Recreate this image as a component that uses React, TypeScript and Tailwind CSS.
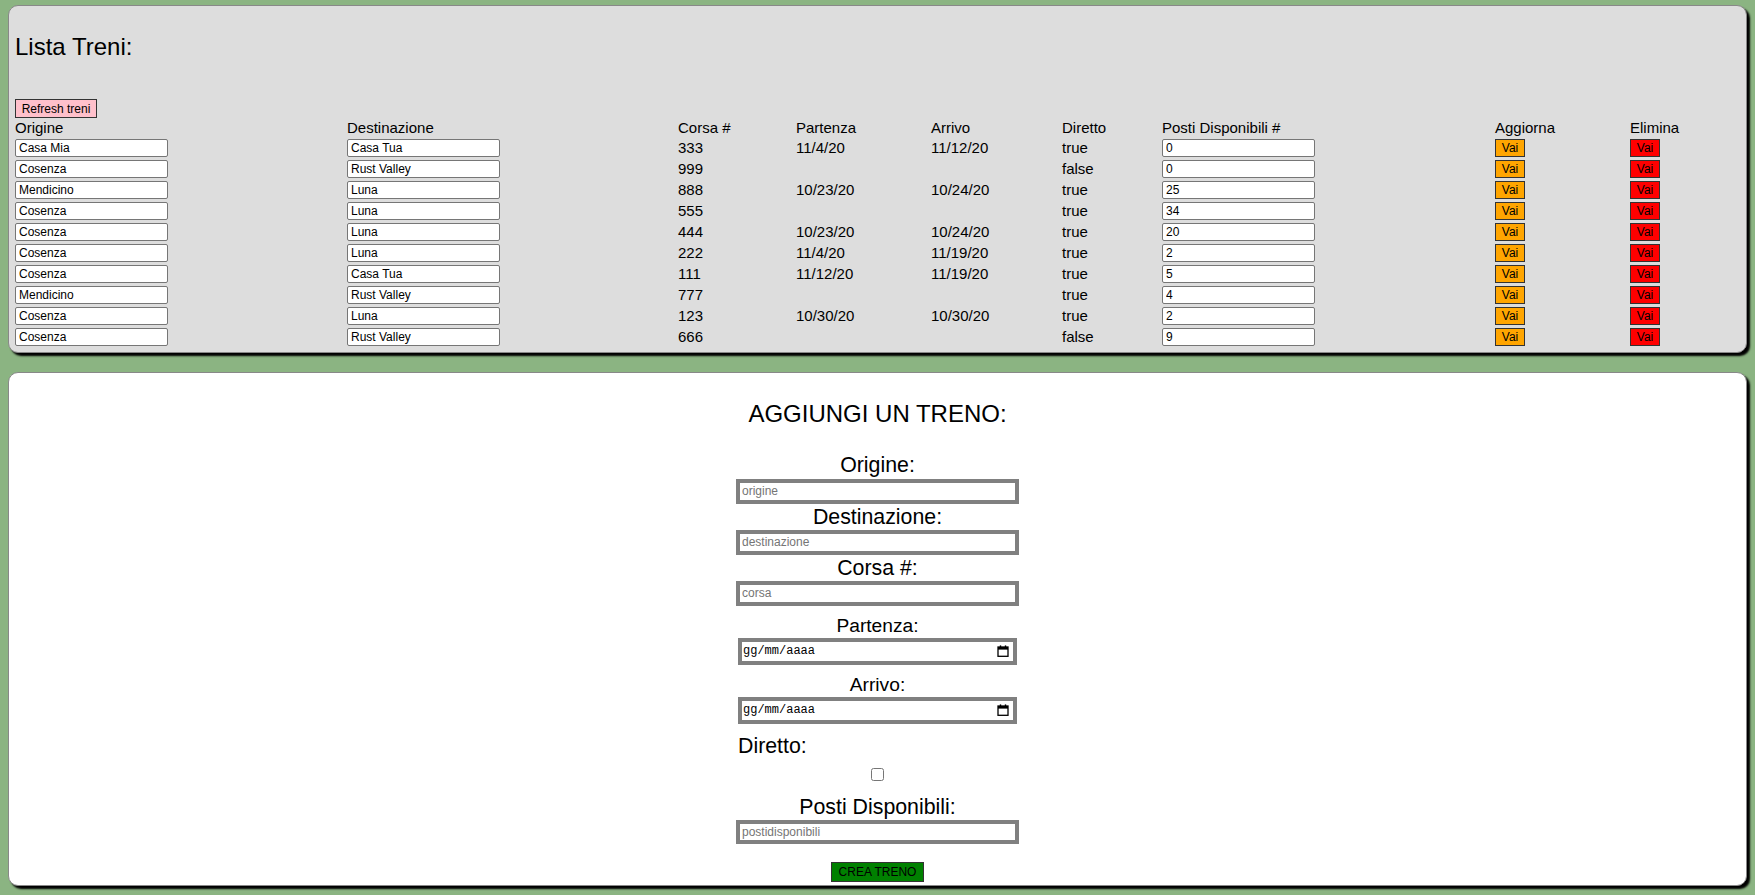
import React from "react";

type Treno = {
  origine: string;
  destinazione: string;
  corsa: string;
  partenza: string;
  arrivo: string;
  diretto: string;
  posti: string;
};

const treni: Treno[] = [
  { origine: "Casa Mia", destinazione: "Casa Tua", corsa: "333", partenza: "11/4/20", arrivo: "11/12/20", diretto: "true", posti: "0" },
  { origine: "Cosenza", destinazione: "Rust Valley", corsa: "999", partenza: "", arrivo: "", diretto: "false", posti: "0" },
  { origine: "Mendicino", destinazione: "Luna", corsa: "888", partenza: "10/23/20", arrivo: "10/24/20", diretto: "true", posti: "25" },
  { origine: "Cosenza", destinazione: "Luna", corsa: "555", partenza: "", arrivo: "", diretto: "true", posti: "34" },
  { origine: "Cosenza", destinazione: "Luna", corsa: "444", partenza: "10/23/20", arrivo: "10/24/20", diretto: "true", posti: "20" },
  { origine: "Cosenza", destinazione: "Luna", corsa: "222", partenza: "11/4/20", arrivo: "11/19/20", diretto: "true", posti: "2" },
  { origine: "Cosenza", destinazione: "Casa Tua", corsa: "111", partenza: "11/12/20", arrivo: "11/19/20", diretto: "true", posti: "5" },
  { origine: "Mendicino", destinazione: "Rust Valley", corsa: "777", partenza: "", arrivo: "", diretto: "true", posti: "4" },
  { origine: "Cosenza", destinazione: "Luna", corsa: "123", partenza: "10/30/20", arrivo: "10/30/20", diretto: "true", posti: "2" },
  { origine: "Cosenza", destinazione: "Rust Valley", corsa: "666", partenza: "", arrivo: "", diretto: "false", posti: "9" },
];

const cols = "grid grid-cols-[332px_331px_118px_135px_131px_100px_333px_135px_1fr] items-center";

function CellInput({ value }: { value: string }) {
  return (
    <input
      type="text"
      defaultValue={value}
      className="block h-[18px] w-[153px] rounded-[2px] border border-[#767676] bg-white pl-[3px] text-[12px] leading-[14px] text-black"
    />
  );
}

function VaiButton({ color }: { color: "orange" | "red" }) {
  return (
    <button
      className={
        color === "orange"
          ? "block h-[18px] w-[30px] border border-[#333] bg-[#ffa500] text-[12px] leading-[14px] text-black"
          : "block h-[18px] w-[30px] border border-[#333] bg-[#ff0000] text-[12px] leading-[14px] text-black"
      }
    >
      Vai
    </button>
  );
}

function TextField({ placeholder, className }: { placeholder: string; className: string }) {
  return (
    <input
      type="text"
      placeholder={placeholder}
      className={`h-[25px] w-[283px] border-4 border-[#808080] bg-white px-[2px] text-[12px] text-black placeholder:text-[#757575] ${className}`}
    />
  );
}

function DateField({ className }: { className: string }) {
  return (
    <div
      className={`flex h-[27px] w-[279px] items-center justify-between border-4 border-[#808080] bg-white pl-[1px] pr-[4px] ${className}`}
    >
      <span className="font-['Liberation_Mono',monospace] text-[12px] text-black">gg/mm/aaaa</span>
      <svg width="12" height="12" viewBox="0 0 12 12" aria-hidden="true">
        <rect x="1" y="2" width="10" height="9.3" fill="none" stroke="#000" strokeWidth="1.3" />
        <rect x="1" y="2" width="10" height="2.6" fill="#000" />
        <rect x="2.8" y="0.4" width="1.4" height="2.2" fill="#000" />
        <rect x="7.8" y="0.4" width="1.4" height="2.2" fill="#000" />
      </svg>
    </div>
  );
}

export default function App() {
  return (
    <div className="flex min-h-screen flex-col gap-[19px] bg-[#8bb482] px-[8px] pt-[5px] pb-[8px] font-['Liberation_Sans',Arial,sans-serif] text-black">
      <section className="rounded-[10px] border border-[#888] bg-[#dddddd] px-[6px] pt-[26.7px] pb-[6px] shadow-[3px_3px_2px_#000]">
        <h2 className="text-[24px] leading-[28px]">Lista Treni:</h2>
        <button className="mt-[38.8px] block h-[19px] w-[82px] border border-[#333] bg-[#ffc0cb] text-[12px] leading-[14px] text-black">
          Refresh treni
        </button>
        <div className={`${cols} mt-[1px] h-[18px] text-[15px] leading-[18px]`}>
          <span>Origine</span>
          <span>Destinazione</span>
          <span>Corsa #</span>
          <span>Partenza</span>
          <span>Arrivo</span>
          <span>Diretto</span>
          <span>Posti Disponibili #</span>
          <span>Aggiorna</span>
          <span>Elimina</span>
        </div>
        <div className="mt-[2px] flex flex-col gap-[3px]">
          {treni.map((t) => (
            <div key={t.corsa} className={`${cols} h-[18px] text-[15px] leading-[18px]`}>
              <CellInput value={t.origine} />
              <CellInput value={t.destinazione} />
              <span>{t.corsa}</span>
              <span>{t.partenza}</span>
              <span>{t.arrivo}</span>
              <span>{t.diretto}</span>
              <CellInput value={t.posti} />
              <div>
                <VaiButton color="orange" />
              </div>
              <div>
                <VaiButton color="red" />
              </div>
            </div>
          ))}
        </div>
      </section>

      <section className="flex flex-col items-center rounded-[10px] border border-[#888] bg-white pt-[27px] pb-[3.5px] shadow-[3px_3px_2px_#000]">
        <h3 className="text-[24px] leading-[28px]">AGGIUNGI UN TRENO:</h3>
        <div className="flex w-[283px] flex-col items-center text-center">
          <label className="mt-[24.8px] text-[21.33px] leading-[24px]">Origine:</label>
          <TextField placeholder="origine" className="mt-[1.7px]" />
          <label className="mt-[0.6px] text-[21.33px] leading-[24px]">Destinazione:</label>
          <TextField placeholder="destinazione" className="mt-[1.4px]" />
          <label className="mt-[0.6px] text-[21.33px] leading-[24px]">Corsa #:</label>
          <TextField placeholder="corsa" className="mt-[1.4px]" />
          <label className="mt-[9.35px] text-[19.2px] leading-[22px]">Partenza:</label>
          <DateField className="mt-[0.65px]" />
          <label className="mt-[9.35px] text-[19.2px] leading-[22px]">Arrivo:</label>
          <DateField className="mt-[0.65px]" />
          <label className="mt-[9.6px] self-stretch pl-[2px] text-left text-[21.33px] leading-[24px]">Diretto:</label>
          <input type="checkbox" className="mt-[10px] h-[13px] w-[13px]" />
          <label className="mt-[14px] text-[21.33px] leading-[24px]">Posti Disponibili:</label>
          <input
            type="text"
            placeholder="postidisponibili"
            className="mt-[1.4px] h-[24px] w-[283px] border-4 border-[#808080] bg-white px-[2px] text-[12px] text-black placeholder:text-[#757575]"
          />
          <button className="mt-[18px] h-[20px] w-[93px] border border-[#333] bg-[#008000] text-[12px] leading-[14px] text-black">
            CREA TRENO
          </button>
        </div>
      </section>
    </div>
  );
}
